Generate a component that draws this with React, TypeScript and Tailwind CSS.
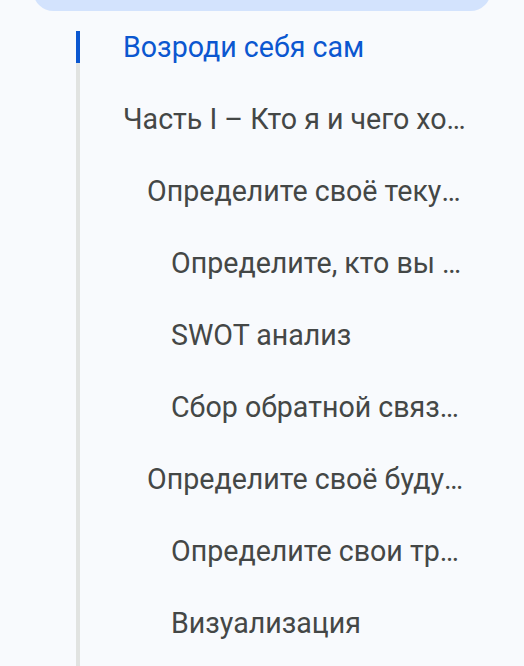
import React from "react";

const items: { text: string; level: number; active?: boolean }[] = [
  { text: "Возроди себя сам", level: 1, active: true },
  { text: "Часть I – Кто я и чего хочу достичь", level: 1 },
  { text: "Определите своё текущее состояние", level: 2 },
  { text: "Определите, кто вы есть на самом деле", level: 3 },
  { text: "SWOT анализ", level: 3 },
  { text: "Сбор обратной связи от окружающих", level: 3 },
  { text: "Определите своё будущее состояние", level: 2 },
  { text: "Определите свои треугольники", level: 3 },
  { text: "Визуализация", level: 3 },
];

export default function App() {
  return (
    <div
      className="w-[524px] h-[666px] overflow-hidden bg-[#f8fafd]"
      style={{ fontFamily: "Roboto, 'Noto Sans', sans-serif" }}
    >
      <div className="mx-[33px] mt-[-30px] h-[41px] rounded-[30px] bg-[#d3e3fd]" />
      <ul className="ml-[76px] mr-[54px] mt-[20px] pb-[40px] flex flex-col gap-[40px] border-l-4 border-[#e1e3e1]">
        {items.map((it, i) => (
          <li
            key={i}
            className={
              "h-[32px] flex items-center text-[28.6px] leading-[32px] " +
              (it.active
                ? "-ml-[4px] border-l-4 border-[#0b57d0] text-[#0b57d0]"
                : "text-[#444746]")
            }
          >
            <span
              className={
                "block truncate " +
                (it.level === 1 ? "pl-[43px]" : it.level === 2 ? "pl-[67px]" : "pl-[91px]")
              }
            >
              {it.text}
            </span>
          </li>
        ))}
      </ul>
    </div>
  );
}
